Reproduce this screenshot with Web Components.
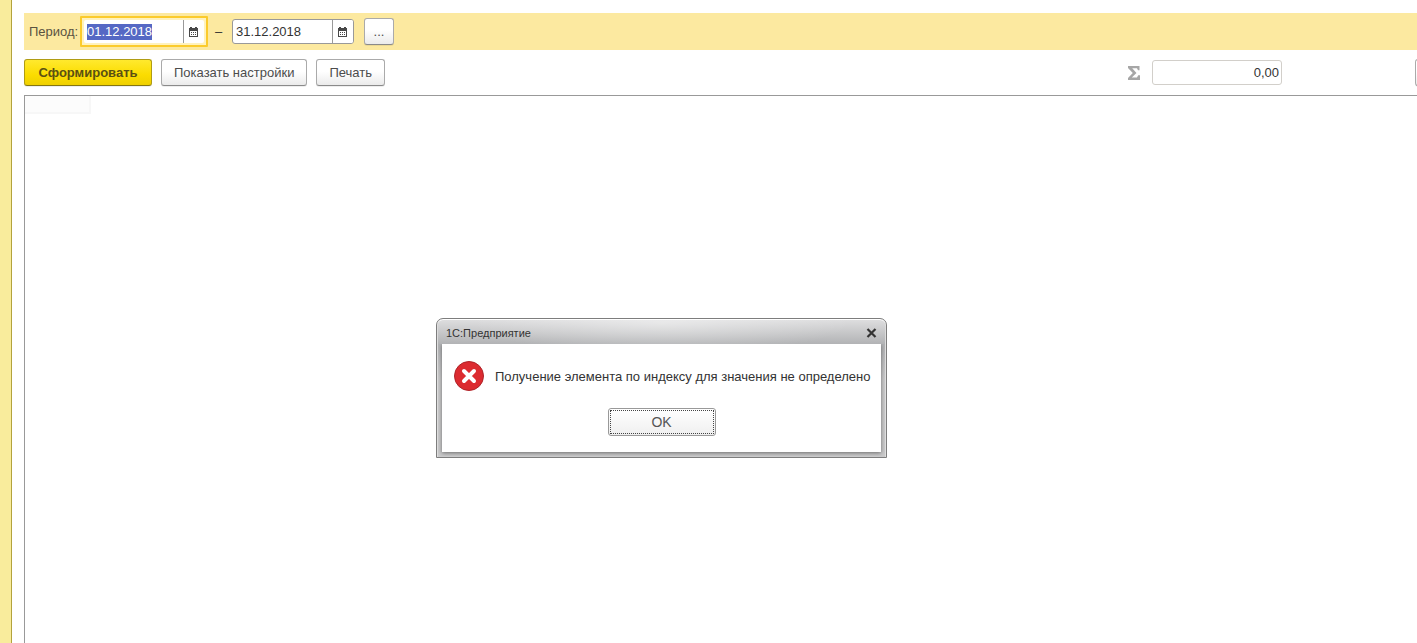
<!DOCTYPE html>
<html lang="ru">
<head>
<meta charset="utf-8">
<title>1С:Предприятие</title>
<style>
html, body { height: 100%; }
body { margin: 0; background: #fff; color: #404040; font: 13px/16px "Liberation Sans", Arial, sans-serif; overflow: hidden; }
</style>
</head>
<body>
<report-page></report-page>
<script>
const define = (name, html, setup) => {
  const template = document.createElement('template');
  template.innerHTML = html;
  customElements.define(name, class extends HTMLElement {
    constructor() {
      super();
      this.attachShadow({ mode: 'open' }).append(template.content.cloneNode(true));
    }
    connectedCallback() { if (setup) setup(this, this.shadowRoot); }
  });
};

define('ui-button', `
<style>
:host { display: block; }
button { box-sizing: border-box; display: block; width: 100%; height: 27px; padding: 0 12px; font: inherit; color: #4c4c4c; white-space: nowrap;
  border: 1px solid #aaa; border-bottom-color: #8a8a8a; border-radius: 3px; background: linear-gradient(#fff 45%, #ebebeb); box-shadow: 0 1px 0 #0001; }
:host([kind="primary"]) { min-width: 128px; }
:host([kind="primary"]) button { font-weight: bold; color: #5a5013; border-color: #b09c14; border-bottom-color: #857610; background: linear-gradient(#ffe92e, #fbdc00 60%, #efd000); }
:host([kind="dialog"]) button { position: relative; height: 28px; color: #555; box-shadow: none; border-color: #999; background: linear-gradient(#fff, #efefef); }
:host([kind="dialog"]) button::after { content: ""; position: absolute; inset: 1px; border: 1px dotted #444; }
:host([kind="more"]) button { padding: 0; }
</style>
<button type="button"><slot></slot></button>`, (host, root) => {
  if (host.hasAttribute('label')) root.querySelector('button').setAttribute('aria-label', host.getAttribute('label'));
});

define('date-field', `
<style>
:host { display: block; width: 122px; }
.box { box-sizing: border-box; display: flex; height: 25px; border: 1px solid #999; border-radius: 3px; background: #fff; overflow: hidden; }
input { flex: 1; min-width: 0; box-sizing: border-box; border: 0; outline: 0; padding: 0 3px; background: none; font: inherit; color: #333; }
input::selection { background: #5568c4; color: #fff; }
button { box-sizing: border-box; width: 21px; padding: 0 1px 0 0; border: 0; border-left: 1px solid #999; background: #fff; display: grid; place-items: center; }
svg { display: block; }
:host([active]) { width: 128px; }
:host([active]) .box { height: 31px; border: 2px solid #fbcb2c; border-radius: 1px; padding: 2px; background: #fff2bd; }
:host([active]) input { background: #fff; border-radius: 2px 0 0 2px; }
:host([active]) button { border-radius: 0 2px 2px 0; }
</style>
<div class="box">
  <input type="text">
  <button type="button" aria-label="Выбрать дату">
    <svg width="9" height="10" viewBox="0 0 9 10" shape-rendering="crispEdges"><path d="M1 0h2v1h3V0h2v1h1v9H0V1h1z" fill="#484848"/><path d="M1 4h7v5H1z" fill="#fff"/><path d="M2 5h1v1H2zM4 5h1v1H4zM6 5h1v1H6zM2 7h1v1H2zM4 7h1v1H4zM6 7h1v1H6z" fill="#484848"/></svg>
  </button>
</div>`, (host, root) => {
  const input = root.querySelector('input');
  input.value = host.getAttribute('value');
  input.setAttribute('aria-label', host.getAttribute('label'));
  if (host.hasAttribute('active')) { input.focus(); input.select(); }
});

define('period-bar', `
<style>
:host { display: flex; align-items: center; height: 37px; padding-left: 5px; background: #fce9a0; }
.label { width: 51px; color: #5a5340; }
.dash { width: 24px; box-sizing: border-box; padding-right: 3px; text-align: center; color: #333; }
ui-button { width: 30px; margin-left: 10px; }
</style>
<span class="label">Период:</span>
<date-field active value="01.12.2018" label="Начало периода"></date-field>
<span class="dash">–</span>
<date-field value="31.12.2018" label="Конец периода"></date-field>
<ui-button kind="more" label="Выбрать период">...</ui-button>`);

define('sum-field', `
<style>
:host { display: flex; align-items: center; }
label { display: flex; align-items: center; gap: 12px; }
svg { display: block; }
input { box-sizing: border-box; width: 130px; height: 25px; padding: 0 2px; border: 1px solid #d2cfca; border-radius: 3px; font: inherit; color: #333; text-align: right; }
</style>
<label><svg role="img" aria-label="Сумма" width="12" height="14" viewBox="0 0 12 14"><path d="M0 0h11.5v4.3H10L9 2.2H4.2L8.5 7l-4.7 4.5H9l1.2-2.2H12V14H0v-2l4.8-5L0 2z" fill="#a6a6a6"/></svg><input type="text" value="0,00" readonly></label>`);

define('command-bar', `
<style>
:host { display: flex; align-items: center; gap: 9px; padding: 9px 0; overflow: hidden; }
sum-field { margin-left: auto; margin-right: 124px; }
.more { flex: none; width: 28px; margin-right: -26px; }
</style>
<ui-button kind="primary">Сформировать</ui-button>
<ui-button>Показать настройки</ui-button>
<ui-button>Печать</ui-button>
<sum-field></sum-field>
<ui-button class="more" label="Ещё"></ui-button>`);

define('report-sheet', `
<style>
:host { display: block; border: solid #999; border-width: 1px 0 0 1px; background: #fff; }
.cell { width: 64px; height: 16px; border: solid #f7f7f7; border-width: 0 2px 2px 0; background: #fcfcfc; }
</style>
<div class="cell"></div>`);

define('message-dialog', `
<style>
:host { box-sizing: border-box; display: block; width: 451px; border: 1px solid #7d7d7d; border-radius: 7px 7px 0 0; padding: 0 5px 5px;
  background: radial-gradient(ellipse 190px 30px at 50% 4px, #fff6, #fff0) no-repeat, linear-gradient(#dfdfe0, #b2b3b5 25px, #c9c9ca 60px, #c9c9ca); box-shadow: inset 0 1px 0 #fff, inset 1px 0 0 #ddd, inset -1px 0 0 #ddd; }
header { display: flex; align-items: center; justify-content: space-between; height: 25px; padding: 2px 4px 0; box-sizing: border-box; font-size: 11px; color: #333; }
h1 { margin: 0; font: inherit; }
header button { display: block; border: 0; padding: 0; background: none; }
svg { display: block; flex: none; }
main { background: #fff; padding: 17px 12px 16px; box-shadow: 0 1px 4px #0007; clip-path: inset(0 -4px -4px -4px); }
.message { display: flex; align-items: center; gap: 11px; color: #333; white-space: nowrap; }
p { margin: 0; padding-top: 1px; }
ui-button { width: 108px; margin: 17px auto 0; font-size: 14px; }
</style>
<header><h1><slot name="title"></slot></h1>
<button type="button" aria-label="Закрыть"><svg width="11" height="10" viewBox="0 0 11 10"><path d="M1.5 1l8 8M9.5 1l-8 8" stroke="#333" stroke-width="2.2"/></svg></button></header>
<main>
<div class="message"><svg width="30" height="30" viewBox="0 0 30 30"><circle cx="15" cy="15" r="14.5" fill="#dc2b30" stroke="#ae2429"/><path d="M10 10l10 10M20 10L10 20" stroke="#fff" stroke-width="4" stroke-linecap="round"/></svg><p><slot></slot></p></div>
<ui-button kind="dialog">OK</ui-button>
</main>`, host => { host.setAttribute('role', 'alertdialog'); });

define('report-page', `
<style>
:host { box-sizing: border-box; display: flex; height: 100vh; }
aside { flex: none; width: 11px; background: #f9ec9c; border-right: 1px solid #b3a33c; }
section { flex: 1; min-width: 0; display: flex; flex-direction: column; padding: 13px 0 0 12px; }
report-sheet { flex: 1; }
message-dialog { position: absolute; left: 436px; top: 318px; }
</style>
<aside></aside>
<section><period-bar></period-bar><command-bar></command-bar><report-sheet></report-sheet></section>
<message-dialog><span slot="title">1С:Предприятие</span>Получение элемента по индексу для значения не определено</message-dialog>`);
</script>
</body>
</html>
